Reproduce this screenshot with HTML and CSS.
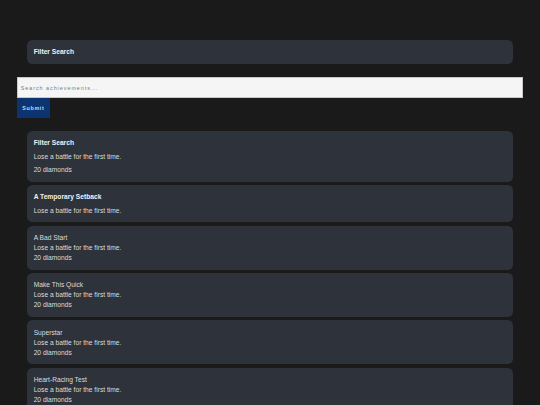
FILE: index.html
```html
<!DOCTYPE html>
<html lang="en">
<head>
<meta charset="utf-8">
<title>Achievements</title>
<link rel="stylesheet" href="styles.css">
</head>
<body>
<div class="page">
  <div class="card header-card">
    <h2 class="title">Filter Search</h2>
  </div>
  <form class="search">
    <input class="search-input" type="text" placeholder="Search achievements...">
    <button class="submit" type="button">Submit</button>
  </form>
  <div class="list">
    <div class="card spaced">
      <h3 class="title">Filter Search</h3>
      <p class="line">Lose a battle for the first time.</p>
      <p class="line">20 diamonds</p>
    </div>
    <div class="card spaced">
      <h3 class="title">A Temporary Setback</h3>
      <p class="line">Lose a battle for the first time.</p>
    </div>
    <div class="card">
      <div class="line">A Bad Start</div>
      <div class="line">Lose a battle for the first time.</div>
      <div class="line">20 diamonds</div>
    </div>
    <div class="card">
      <div class="line">Make This Quick</div>
      <div class="line">Lose a battle for the first time.</div>
      <div class="line">20 diamonds</div>
    </div>
    <div class="card">
      <div class="line">Superstar</div>
      <div class="line">Lose a battle for the first time.</div>
      <div class="line">20 diamonds</div>
    </div>
    <div class="card">
      <div class="line">Heart-Racing Test</div>
      <div class="line">Lose a battle for the first time.</div>
      <div class="line">20 diamonds</div>
    </div>
  </div>
</div>
</body>
</html>
```

FILE: styles.css
```css
* { box-sizing: border-box; }
html, body { margin: 0; padding: 0; }
body {
  background: #1a1a1a;
  font-family: "Liberation Sans", Arial, sans-serif;
  color: #dcdcdc;
  font-size: 6.67px;
  line-height: 10px;
}
.page {
  padding: 40px 16.67px 0;
}
.card {
  background: #2d323b;
  border-radius: 5.33px;
  padding: 7.25px 7px 6.75px;
}
.header-card {
  margin: 0 10px;
}
.title {
  margin: 0;
  font-size: 6.67px;
  line-height: 10px;
  font-weight: bold;
  color: #f2f2f2;
}
.line {
  margin: 0;
  font-size: 6.67px;
  line-height: 10px;
  color: #dcdcdc;
}
.spaced .line { margin-top: 3.33px; }
.search {
  margin-top: 13.33px;
  display: flex;
  flex-direction: column;
  align-items: flex-start;
}
.search-input {
  display: block;
  width: 100%;
  height: 21px;
  margin: 0;
  padding: 0 3px;
  border: 1px solid #c8c8c8;
  background: #f5f5f5;
  font-family: "Liberation Sans", Arial, sans-serif;
  font-size: 5.33px;
  letter-spacing: 1px;
  color: #333;
  outline: none;
}
.search-input::placeholder { color: #7a7a7a; }
.submit {
  display: block;
  width: 33.5px;
  height: 19.5px;
  margin: 0;
  padding: 0;
  border: none;
  background: #0c3471;
  color: #d0d8e8;
  font-family: "Liberation Sans", Arial, sans-serif;
  font-size: 5.33px;
  font-weight: bold;
  letter-spacing: 0.67px;
}
.list {
  margin-top: 13.33px;
  padding: 0 10px;
  display: flex;
  flex-direction: column;
  gap: 3.33px;
}
```
